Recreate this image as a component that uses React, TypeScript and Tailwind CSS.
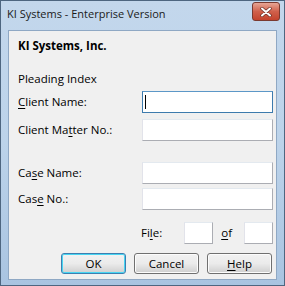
function U({ children }: { children: string }) {
  return <span className="underline underline-offset-2">{children}</span>;
}

function Field({ wide = true }: { wide?: boolean }) {
  return (
    <div
      className={
        (wide ? "w-[131px]" : "w-[29px]") +
        " h-[22px] bg-white border border-[#abadb3] border-t-[#e3e9ef] border-l-[#e2e3ea]"
      }
    />
  );
}

function Btn({
  children,
  focus = false,
}: {
  children: React.ReactNode;
  focus?: boolean;
}) {
  return (
    <button
      className={
        "w-[65px] h-[21px] rounded-[3px] border text-[11.5px] leading-none text-black bg-gradient-to-b from-[#f2f2f2] via-[#ebebeb] to-[#cfcfcf] " +
        (focus
          ? "border-[#3c7fb1] shadow-[inset_0_0_0_1px_#48d5f2]"
          : "border-[#707070] shadow-[inset_0_0_0_1px_#fcfcfc]")
      }
    >
      {children}
    </button>
  );
}

export default function App() {
  return (
    <div
      className="w-[285px] h-[286px] flex flex-col border border-[#4e6680] bg-gradient-to-b from-[#c3d7ec] via-[#bcd3ea] to-[#a9c4e1] text-[11.5px] text-black"
      style={{ fontFamily: '"Open Sans", "Noto Sans", sans-serif' }}
    >
      {/* title bar */}
      <div className="h-[29px] flex items-start justify-between pl-[6px] pr-[4px]">
        <span className="mt-[6px] text-[11px] leading-[14px] text-[#1a1a1a]">
          KI Systems - Enterprise Version
        </span>
        <div className="mt-[1px] w-[28px] h-[19px] rounded-[3px] border border-[#7a3a30] bg-gradient-to-b from-[#e6a595] via-[#d0604b] to-[#c3432d] flex items-center justify-center">
          <svg width="12" height="10" viewBox="0 0 12 10">
            <path
              d="M2 1.5 L10 8.5 M10 1.5 L2 8.5"
              stroke="#6a3028"
              strokeWidth="3.4"
              strokeLinecap="round"
            />
            <path
              d="M2 1.5 L10 8.5 M10 1.5 L2 8.5"
              stroke="#ffffff"
              strokeWidth="2"
              strokeLinecap="round"
            />
          </svg>
        </div>
      </div>

      {/* client area */}
      <div className="mx-[7px] h-[250px] bg-[#f0f0f0] border border-[#8fa8c4] flex flex-col pl-[9px] pr-[3px]">
        <div className="mt-[8px] h-[14px] leading-[14px] font-bold">
          KI Systems, Inc.
        </div>

        <div className="mt-[19px] leading-[14px]">Pleading Index</div>

        <div className="mt-[5px] flex items-center justify-between">
          <span>
            <U>C</U>lient Name:
          </span>
          <div className="w-[131px] h-[22px] bg-white border border-[#3d7bad] border-t-[#5c97c7] flex items-center pl-[2px]">
            <div className="w-px h-[14px] bg-black" />
          </div>
        </div>

        <div className="mt-[6px] flex items-center justify-between">
          <span>
            Client Ma<U>t</U>ter No.:
          </span>
          <Field />
        </div>

        <div className="mt-[21px] flex items-center justify-between">
          <span>
            Ca<U>s</U>e Name:
          </span>
          <Field />
        </div>

        <div className="mt-[4px] flex items-center justify-between">
          <span>
            Cas<U>e</U> No.:
          </span>
          <Field />
        </div>

        <div className="mt-[12px] flex items-center justify-end">
          <span>
            Fi<U>l</U>e:
          </span>
          <div className="ml-[22px]">
            <Field wide={false} />
          </div>
          <span className="ml-[8px]">
            <U>o</U>f
          </span>
          <div className="ml-[12px]">
            <Field wide={false} />
          </div>
        </div>

        <div className="mt-[9px] flex justify-end gap-[8px] pr-[1px]">
          <Btn focus>OK</Btn>
          <Btn>Cancel</Btn>
          <Btn>
            <U>H</U>elp
          </Btn>
        </div>
      </div>
    </div>
  );
}
